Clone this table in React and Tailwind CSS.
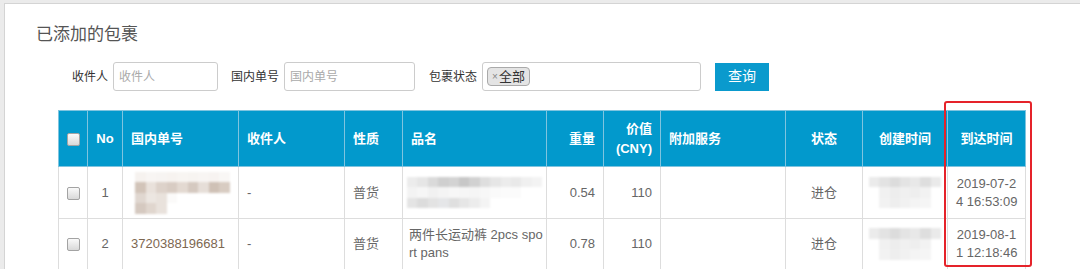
import React from "react";

const FONT = { fontFamily: '"Liberation Sans", "Noto Sans CJK SC", sans-serif' };

// column widths for the parcel table
const COLS = [29, 35, 116, 106, 58, 144, 57, 57, 125, 77, 85, 78];

function Checkbox() {
  return (
    <span className="inline-block w-[13px] h-[13px] rounded-[2px] border border-[#a3a3a3] bg-gradient-to-b from-[#fafafa] to-[#d9d9d9] align-middle" />
  );
}

// pixelated, blurred placeholder for hidden values
function Mosaic({ lines, size = 10, className = "" }) {
  return (
    <div className={"flex flex-col blur-[1.2px] " + className}>
      {lines.map((line, i) => (
        <div key={i} className="flex">
          {line.map((c, j) => (
            <span key={j} style={{ background: c, width: size, height: size }} />
          ))}
        </div>
      ))}
    </div>
  );
}

const trackingBlur = [
  ["#f6f2ef", "#f8f5f3", "#f7f4f2", "#f7f3f0", "#f8f5f2", "#f7f4f1", "#f8f5f3", "#f7f3f1", "#f9f7f5"],
  ["#d2c4b9", "#e9e1db", "#ddd2ca", "#d8ccc3", "#e3d9d1", "#d5c9c0", "#e6ded8", "#cfc1b6", "#d8ccc2"],
  ["#e0d7d0", "#ece6e1", "#e9e2dc", "#fbfaf9", "#ffffff", "#ffffff", "#ffffff", "#ffffff", "#ffffff"],
  ["#d5c9c0", "#e0d6ce", "#e9e2dc", "#ffffff", "#ffffff", "#ffffff", "#ffffff", "#ffffff", "#ffffff"],
];

const productBlur = [
  ["#ececec", "#e6e6e6", "#dadada", "#cfcfcf", "#d3d3d3", "#c7c7c7", "#d1d1d1", "#dedede", "#e6e6e6", "#ececec", "#e9e9e9", "#f0f0f0", "#f3f3f3"],
  ["#f3f3f3", "#f6f6f6", "#f1f1f1", "#f4f4f4", "#f7f7f7", "#f6f6f6", "#f5f5f5", "#f7f7f7", "#fafafa", "#fbfbfb", "#fbfbfb", "#ffffff", "#ffffff"],
  ["#e4e4e4", "#dcdcdc", "#e3e3e3", "#e5e6e8", "#dfdfdf", "#e6e6e6", "#ececec", "#f4f4f4", "#ffffff", "#ffffff", "#ffffff", "#ffffff", "#ffffff"],
];

const createdBlur = [
  ["#ebebeb", "#e3e3e3", "#dcdcdc", "#e4e4e4", "#e8e8e8", "#dedede", "#eaeaea"],
  ["#ffffff", "#f1f1f1", "#ededed", "#f0f0f0", "#eeeeee", "#f2f2f2", "#ffffff"],
  ["#ffffff", "#f2f2f2", "#eeeeee", "#f1f1f1", "#f4f4f4", "#f5f5f5", "#ffffff"],
];

const HEAD = "border border-[#7fc4df] bg-[#0299cc] text-white font-bold text-[13px] leading-[20px] px-2";
const CELL = "border border-[#dddddd] text-[13px] leading-[18px] px-2";

export default function App() {
  return (
    <div className="relative w-[1080px] h-[269px] overflow-hidden bg-[#ebebeb] pt-[3px] pl-[4px]" style={FONT}>
      <div className="h-full bg-white border-t border-l border-[#d4d4d4] pt-[19px]">
        <h2 className="pl-[31px] text-[17px] leading-[24px] text-[#555] font-normal">已添加的包裹</h2>

        {/* search filters */}
        <div className="flex items-center mt-[15px] pl-[67px] text-[12px] text-[#333]">
          <label className="mr-[5px]">收件人</label>
          <input
            placeholder="收件人"
            className="w-[105px] h-[29px] border border-[#cccccc] rounded-[3px] px-[5px] text-[12px] placeholder:text-[#aaa] outline-none"
          />
          <label className="ml-[13px] mr-[5px]">国内单号</label>
          <input
            placeholder="国内单号"
            className="w-[131px] h-[29px] border border-[#cccccc] rounded-[3px] px-[5px] text-[12px] placeholder:text-[#aaa] outline-none"
          />
          <label className="ml-[14px] mr-[5px]">包裹状态</label>
          <div className="w-[219px] h-[29px] border border-[#cccccc] rounded-[3px] flex items-center px-[4px]">
            <span className="flex items-center h-[19px] px-[4px] bg-[#e4e4e4] border border-[#aaaaaa] rounded-[4px] text-[13px] text-[#333]">
              <span className="text-[10px] text-[#888] mr-[1px] leading-none">×</span>全部
            </span>
          </div>
          <button className="ml-[14px] w-[54px] h-[28px] bg-[#0a9acd] text-white text-[14px]">查询</button>
        </div>

        {/* parcel table */}
        <table className="mt-[19px] ml-[53px] table-fixed border-collapse w-[967px] text-[#666]">
          <colgroup>
            {COLS.map((w, i) => (
              <col key={i} style={{ width: w }} />
            ))}
          </colgroup>
          <thead>
            <tr className="h-[56px]">
              <th className={HEAD + " text-center px-0"}><Checkbox /></th>
              <th className={HEAD + " text-center px-0"}>No</th>
              <th className={HEAD + " text-left"}>国内单号</th>
              <th className={HEAD + " text-left"}>收件人</th>
              <th className={HEAD + " text-left"}>性质</th>
              <th className={HEAD + " text-left"}>品名</th>
              <th className={HEAD + " text-right"}>重量</th>
              <th className={HEAD + " text-right"}>价值<br />(CNY)</th>
              <th className={HEAD + " text-left"}>附加服务</th>
              <th className={HEAD + " text-center"}>状态</th>
              <th className={HEAD + " text-center"}>创建时间</th>
              <th className={HEAD + " text-center"}>到达时间</th>
            </tr>
          </thead>
          <tbody>
            <tr className="h-[52px]">
              <td className={CELL + " text-center px-0"}><Checkbox /></td>
              <td className={CELL + " text-center px-0"}>1</td>
              <td className={CELL + " px-0"}>
                <Mosaic lines={trackingBlur} size={10.5} className="ml-[4px]" />
              </td>
              <td className={CELL}>-</td>
              <td className={CELL}>普货</td>
              <td className={CELL + " px-[4px]"}>
                <Mosaic lines={productBlur} size={10.5} />
              </td>
              <td className={CELL + " text-right"}>0.54</td>
              <td className={CELL + " text-right"}>110</td>
              <td className={CELL}></td>
              <td className={CELL + " text-center"}>进仓</td>
              <td className={CELL + " px-[6px]"}>
                <Mosaic lines={createdBlur} size={10.5} />
              </td>
              <td className={CELL + " text-center px-0 whitespace-nowrap"}>2019-07-2<br />4 16:53:09</td>
            </tr>
            <tr className="h-[51px]">
              <td className={CELL + " text-center px-0"}><Checkbox /></td>
              <td className={CELL + " text-center px-0"}>2</td>
              <td className={CELL + " text-[#7d6751]"}>3720388196681</td>
              <td className={CELL}>-</td>
              <td className={CELL}>普货</td>
              <td className={CELL + " px-[6px] whitespace-nowrap"}>两件长运动裤 2pcs spo<br />rt pans</td>
              <td className={CELL + " text-right"}>0.78</td>
              <td className={CELL + " text-right"}>110</td>
              <td className={CELL}></td>
              <td className={CELL + " text-center"}>进仓</td>
              <td className={CELL + " px-[6px]"}>
                <Mosaic lines={createdBlur} size={10.5} />
              </td>
              <td className={CELL + " text-center px-0 whitespace-nowrap"}>2019-08-1<br />1 12:18:46</td>
            </tr>
          </tbody>
        </table>
      </div>

      {/* highlight around the arrival column */}
      <div className="absolute left-[944px] top-[101px] w-[88px] h-[166px] border-2 border-[#e5232a] rounded-[3px] pointer-events-none" />
    </div>
  );
}
